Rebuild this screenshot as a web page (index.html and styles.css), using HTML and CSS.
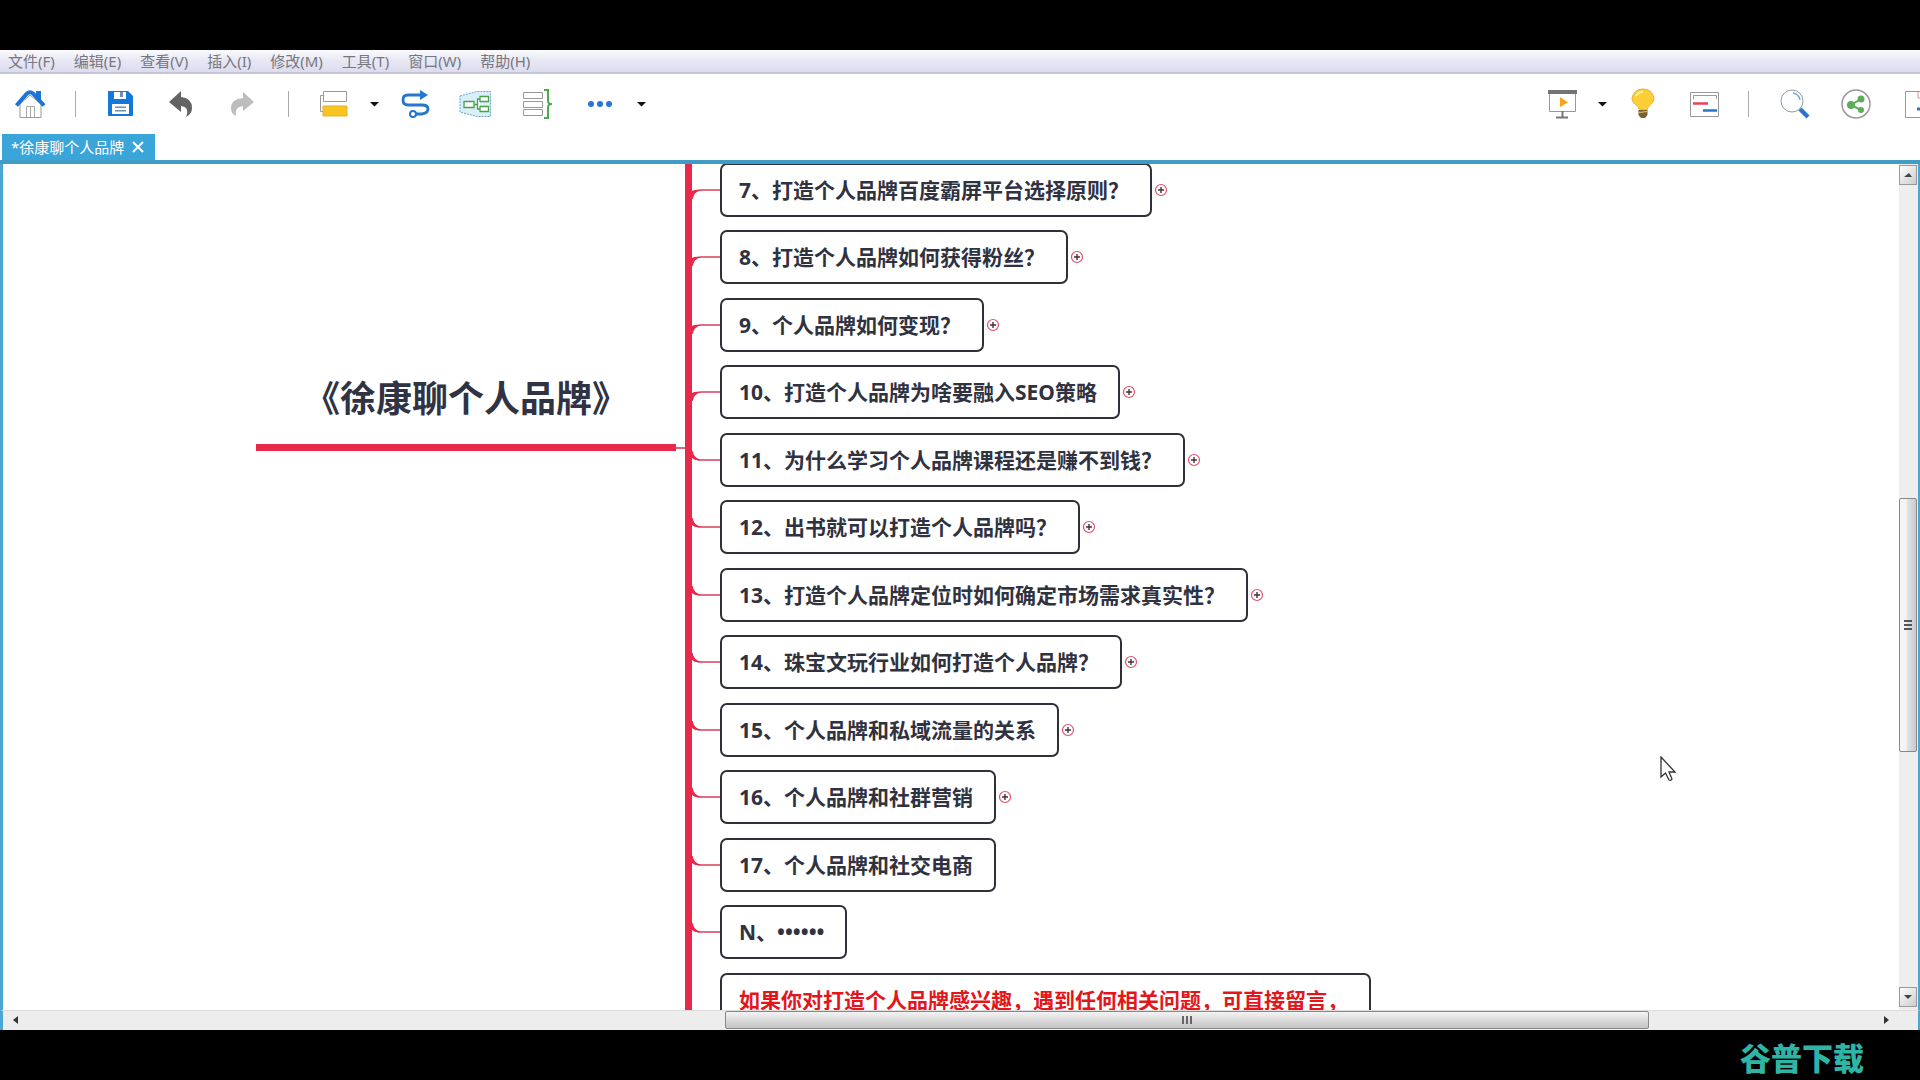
FILE: index.html
```html
<!DOCTYPE html>
<html lang="zh-CN">
<head>
<meta charset="utf-8">
<title>徐康聊个人品牌</title>
<link rel="stylesheet" href="styles.css">
</head>
<body>
<svg class="defs" aria-hidden="true">
  <symbol id="branch-down" viewBox="0 0 28 32"><path d="M0 25Q1 16 9 16H28" fill="none" stroke="#dc3f5c" stroke-width="1.600"/><path d="M0 17Q3 15 9 16Q2 18 0 25Z" fill="#e9294b"/></symbol>
  <symbol id="branch-up" viewBox="0 0 28 32"><path d="M0 7Q1 16 9 16H28" fill="none" stroke="#dc3f5c" stroke-width="1.600"/><path d="M0 7Q2 14 9 16Q3 17 0 14Z" fill="#e9294b"/></symbol>
  <symbol id="plus" viewBox="0 0 14 14"><circle cx="7" cy="7" r="5.5" fill="#fff" stroke="#e2506b" stroke-width="1.2"/><path d="M4 7H10M7 4V10" stroke="#43303c" stroke-width="1.4"/></symbol>
  <symbol id="caret" viewBox="0 0 14 14"><path d="M3 5H12L7.500 9.500Z" fill="#111"/></symbol>
</svg>
<div class="app">
  <nav class="menubar">
    <button>文件(F)</button><button>编辑(E)</button><button>查看(V)</button><button>插入(I)</button><button>修改(M)</button><button>工具(T)</button><button>窗口(W)</button><button>帮助(H)</button>
  </nav>
  <div class="toolbar">
    <div class="tools">
      <button class="tool" aria-label="主页"><svg viewBox="0 0 32 32"><path d="M6 16V29.500H27V16L16 7Z" fill="#fff" stroke="#999"/><path d="M12.500 29V18.500H20.500V29M16.500 18.500V29" fill="none" stroke="#aaa"/><path d="M2.500 17.500L13 5.500Q16 3 19 5.500L30 17.500" fill="none" stroke="#1d74d6" stroke-width="4"/><path d="M22 3H27V12L22 8Z" fill="#1d74d6"/></svg></button>
      <span class="sep"></span>
      <button class="tool" aria-label="保存"><svg viewBox="0 0 32 32"><path d="M3 3H23L28 8V27Q28 28 27 28H4Q3 28 3 27Z" fill="#1478d8"/><path d="M9 4H21V11H9ZM7 16H24V26H7Z" fill="#fff"/><path d="M15 4H18V9H15ZM10 18.500H21V20H10ZM10 22H21V23.500H10Z" fill="#6c91b5"/></svg></button>
      <button class="tool" aria-label="撤销"><svg viewBox="0 0 32 32"><path d="M3 14L15 3V9Q26 10 26 20Q26 26 20 29Q24 19 15 18V24Z" fill="#636363"/></svg></button>
      <button class="tool" aria-label="重做"><svg viewBox="0 0 32 32"><path d="M27 14L16 4V10Q4 11 4 20Q4 26 9 28Q7 19 16 18V23Z" fill="#bdbdbd"/></svg></button>
      <span class="sep"></span>
      <button class="tool" aria-label="主题"><svg viewBox="0 0 32 32"><path d="M6 7.500H2.500V23.500H6M5.500 3.500H28.500V13.500H5.500Z" fill="none" stroke="#999"/><path d="M5 18H29V28H5Z" fill="#fac51e" stroke="#dfb233"/></svg></button>
      <button class="caret" aria-label="更多主题"><svg><use href="#caret"/></svg></button>
      <button class="tool" aria-label="关系"><svg viewBox="0 0 32 32"><path d="M24 7H10Q5 7 5 12T10 17H24Q30 17 30 21T24 26H17" fill="none" stroke="#2477ca" stroke-width="2.800"/><path d="M22 2L30 7L22 12Z" fill="#2477ca"/><circle cx="15" cy="26" r="3" fill="#fff" stroke="#2477ca" stroke-width="2"/></svg></button>
      <button class="tool" aria-label="外框"><svg viewBox="0 0 32 32"><path d="M1 8L18 3.500H31.500V28.500H18L1 24Z" fill="#d9effa" stroke="#6aa6c6" stroke-dasharray="2 1"/><path d="M5 13.500H15V19.500H5ZM21 8.500H29.500V13.500H21ZM21 18.500H29.500V23.500H21ZM15 16.500H18M21 11H18.500V21H21" fill="#fff" stroke="#4ca04a" stroke-width="1.300"/></svg></button>
      <button class="tool" aria-label="概要"><svg viewBox="0 0 32 32"><path d="M3.500 4.500H22.500V10.500H3.500ZM3.500 13.500H22.500V19.500H3.500ZM3.500 21.500H22.500V27.500H3.500Z" fill="#fff" stroke="#999"/><path d="M24 2H28V13Q28 16 32 16Q28 16 28 19V30H24" fill="none" stroke="#50a850" stroke-width="2"/></svg></button>
      <button class="tool wide" aria-label="更多"><svg viewBox="0 0 36 32"><circle cx="10" cy="16" r="3" fill="#2477d3"/><circle cx="19" cy="16" r="3" fill="#2477d3"/><circle cx="28" cy="16" r="3" fill="#2477d3"/></svg></button>
      <button class="caret" aria-label="更多选项"><svg><use href="#caret"/></svg></button>
    </div>
    <div class="tools tools-end">
      <button class="tool" aria-label="演示"><svg viewBox="0 0 32 32"><path d="M3.500 6V23.500H29.500V6" fill="#fff" stroke="#999"/><path d="M2 2H31V6H2Z" fill="#747474"/><path d="M16.500 23V29M10 29.500H22" stroke="#777" stroke-width="2"/><path d="M14 9L22 14.500L14 19Z" fill="#f9a11b"/></svg></button>
      <button class="caret" aria-label="演示选项"><svg><use href="#caret"/></svg></button>
      <button class="tool" aria-label="头脑风暴"><svg viewBox="0 0 32 32"><path d="M13 21C12 17 6 16 6 10Q8 1 17 1T28 10C28 16 22 17 21 22Z" fill="#fdcf35" stroke="#e2b43a"/><path d="M10 8Q12 4 17 4" fill="none" stroke="#fff0a0" stroke-width="2"/><path d="M12.500 22H21.500V27L19 30H15L12.500 27Z" fill="#79612e"/><path d="M13 24.500L21 23.500" stroke="#dfc780"/></svg></button>
      <button class="tool" aria-label="甘特图"><svg viewBox="0 0 32 32"><path d="M3.500 4.500H31.500V28.500H3.500Z" fill="#fff" stroke="#999"/><path d="M6.500 11V7.500H29.500V11" fill="none" stroke="#999"/><path d="M6 15.500H21" stroke="#e5435e" stroke-width="2.500"/><path d="M16 22.500H30" stroke="#2477ca" stroke-width="2.500"/></svg></button>
      <span class="sep"></span>
      <button class="tool" aria-label="搜索"><svg viewBox="0 0 32 32"><circle cx="14" cy="13" r="11" fill="#fdfeff" stroke="#999"/><path d="M15 5Q21 6 22 12" fill="none" stroke="#67aee8" stroke-width="1.500"/><path d="M22 21L30 29" stroke="#2876d2" stroke-width="4.500"/></svg></button>
      <button class="tool" aria-label="分享"><svg viewBox="0 0 32 32"><circle cx="17" cy="16" r="14" fill="#fff" stroke="#999" stroke-width="1.500"/><path d="M22 11L12 17L22 22" fill="none" stroke="#5caf58" stroke-width="2"/><circle cx="12" cy="17" r="4" fill="#5caf58"/><circle cx="22" cy="11" r="3.500" fill="#5caf58"/><circle cx="22" cy="22" r="3" fill="#5caf58"/></svg></button>
      <button class="tool" aria-label="导出"><svg viewBox="0 0 32 32"><path d="M5.500 3.500H22L28 9V29.500H5.500Z" fill="#fff" stroke="#999"/><path d="M18 4V10H24" fill="none" stroke="#d79a86"/><path d="M17 21H28" stroke="#2477ca" stroke-width="3"/></svg></button>
    </div>
  </div>
  <div class="tabs"><div class="tab"><span>*徐康聊个人品牌</span><button aria-label="关闭"><svg viewBox="0 0 12 12"><path d="M1 1L11 11M11 1L1 11" stroke="#fff" stroke-width="2"/></svg></button></div></div>
  <div class="workspace">
    <main class="canvas">
      <h1 class="root">《徐康聊个人品牌》</h1>
      <span class="root-link"></span>
      <ul class="branches">
        <li><svg class="link"><use href="#branch-down"/></svg><div class="node">7、打造个人品牌百度霸屏平台选择原则<span class="mark">？</span></div><button class="expand" aria-label="展开"><svg><use href="#plus"/></svg></button></li>
        <li><svg class="link"><use href="#branch-down"/></svg><div class="node">8、打造个人品牌如何获得粉丝<span class="mark">？</span></div><button class="expand" aria-label="展开"><svg><use href="#plus"/></svg></button></li>
        <li><svg class="link"><use href="#branch-down"/></svg><div class="node">9、个人品牌如何变现<span class="mark">？</span></div><button class="expand" aria-label="展开"><svg><use href="#plus"/></svg></button></li>
        <li><svg class="link"><use href="#branch-down"/></svg><div class="node">10、打造个人品牌为啥要融入SEO策略</div><button class="expand" aria-label="展开"><svg><use href="#plus"/></svg></button></li>
        <li><svg class="link"><use href="#branch-up"/></svg><div class="node">11、为什么学习个人品牌课程还是赚不到钱<span class="mark">？</span></div><button class="expand" aria-label="展开"><svg><use href="#plus"/></svg></button></li>
        <li><svg class="link"><use href="#branch-up"/></svg><div class="node">12、出书就可以打造个人品牌吗<span class="mark">？</span></div><button class="expand" aria-label="展开"><svg><use href="#plus"/></svg></button></li>
        <li><svg class="link"><use href="#branch-up"/></svg><div class="node">13、打造个人品牌定位时如何确定市场需求真实性<span class="mark">？</span></div><button class="expand" aria-label="展开"><svg><use href="#plus"/></svg></button></li>
        <li><svg class="link"><use href="#branch-up"/></svg><div class="node">14、珠宝文玩行业如何打造个人品牌<span class="mark">？</span></div><button class="expand" aria-label="展开"><svg><use href="#plus"/></svg></button></li>
        <li><svg class="link"><use href="#branch-up"/></svg><div class="node">15、个人品牌和私域流量的关系</div><button class="expand" aria-label="展开"><svg><use href="#plus"/></svg></button></li>
        <li><svg class="link"><use href="#branch-up"/></svg><div class="node">16、个人品牌和社群营销</div><button class="expand" aria-label="展开"><svg><use href="#plus"/></svg></button></li>
        <li><svg class="link"><use href="#branch-up"/></svg><div class="node">17、个人品牌和社交电商</div></li>
        <li><svg class="link"><use href="#branch-up"/></svg><div class="node">N、••••••</div></li>
        <li><svg class="link"></svg><div class="node notice">如果你对打造个人品牌感兴趣，遇到任何相关问题，可直接留言，</div></li>
      </ul>
      <svg class="cursor" viewBox="0 0 18 26"><path d="M1 1V21L5.500 17L9 24Q11 25 12 23L9 16H15Z" fill="#fff" stroke="#333" stroke-width="1.300"/></svg>
    </main>
    <div class="vscroll">
      <button class="step" aria-label="向上滚动"><svg viewBox="0 0 10 10"><path d="M1 7H9L6 3Z" fill="#444"/></svg></button>
      <span class="v-before"></span><div class="v-thumb"><svg viewBox="0 0 10 12"><path d="M1 2H9M1 6H9M1 10H9" stroke="#555" stroke-width="2"/></svg></div><span class="v-after"></span>
      <button class="step" aria-label="向下滚动"><svg viewBox="0 0 10 10"><path d="M1 3H9L5 7Z" fill="#444"/></svg></button>
    </div>
  </div>
  <div class="hscroll">
    <button class="h-step" aria-label="向左滚动"><svg viewBox="0 0 10 10"><path d="M7 1V9L2 5Z" fill="#333"/></svg></button>
    <span class="h-before"></span><div class="h-thumb"><svg viewBox="0 0 12 10"><path d="M2 1V9M6 1V9M10 1V9" stroke="#666" stroke-width="2"/></svg></div><span class="h-after"></span>
    <button class="h-step" aria-label="向右滚动"><svg viewBox="0 0 10 10"><path d="M3 1V9L8 5Z" fill="#333"/></svg></button>
  </div>
</div>
<footer class="brand">谷普下载</footer>
</body>
</html>
```
FILE: styles.css
```css
* { box-sizing: border-box; }
body {
  margin: 0;
  height: 100vh;
  padding-top: 50px;
  display: flex;
  flex-direction: column;
  overflow: hidden;
  background: #000;
  font-family: "Noto Sans", "Noto Sans CJK SC", sans-serif;
}
button { padding: 0; border: 0; background: none; font: inherit; color: inherit; }
svg { display: block; }
.defs { position: absolute; width: 0; height: 0; }
.app { flex: 1; min-height: 0; display: flex; flex-direction: column; background: #fff; }

.menubar {
  flex: none;
  height: 24px;
  display: flex;
  align-items: center;
  gap: 19px;
  padding-left: 8px;
  border-bottom: 2px solid #c5c5d9;
  background: linear-gradient(#fafafd, #e7e7f4 50%, #dcdcee);
  color: #77777f;
  font-size: 15px;
  line-height: 20px;
}
.menubar button { white-space: nowrap; }

.toolbar { flex: none; height: 60px; display: flex; justify-content: space-between; padding-left: 14px; overflow: hidden; }
.tools { display: flex; align-items: center; gap: 29px; }
.tools-end { margin-right: -12px; }
.tool, .tool svg { flex: none; width: 32px; height: 32px; }
.tool.wide, .tool.wide svg { width: 36px; }
.caret { margin: 0 -12px; }
.caret, .caret svg { width: 14px; height: 14px; }
.sep { width: 1px; height: 26px; background: #aaa; }

.tabs { flex: none; height: 30px; padding-left: 2px; display: flex; border-bottom: 4px solid #429bc5; }
.tab { display: flex; align-items: center; gap: 8px; padding: 0 11px 0 9px; background: #39a5d9; color: #fff; font-size: 15px; line-height: 20px; }
.tab button, .tab svg { width: 12px; height: 12px; }

.workspace { flex: 1; min-height: 0; display: flex; border-left: 3px solid #4ba6d3; border-right: 2px solid #4ba6d3; }
.canvas { position: relative; flex: 1; min-width: 0; display: flex; align-items: flex-start; overflow: hidden; padding-left: 253px; }
.root {
  flex: none;
  width: 420px;
  height: 287px;
  margin: 0;
  padding-top: 208px;
  border-bottom: 7px solid #e9294b;
  color: #2f3343;
  font-size: 36px;
  line-height: 54px;
  text-align: center;
  white-space: nowrap;
}
.root-link { flex: none; width: 9px; height: 2px; margin-top: 283px; background: #e0607a; }
.branches { flex: none; margin: -1px 0 0; padding: 0; list-style: none; border-left: 7px solid #e9294b; }
.branches li { display: flex; align-items: center; height: 54px; margin-bottom: 14px; }
.branches li:nth-child(odd) { margin-bottom: 13px; }
.link { width: 28px; height: 32px; }
.node {
  height: 54px;
  padding: 0 21px 0 17px;
  border: 2px solid #2f3038;
  border-radius: 7px;
  color: #30323f;
  font-size: 21px;
  font-weight: 700;
  line-height: 50px;
  white-space: nowrap;
}
.mark { font-family: "Noto Sans CJK TC", sans-serif; line-height: 1; }
.node.notice { color: #e3161b; }
.expand { margin-left: 2px; }
.expand, .expand svg { width: 14px; height: 14px; }
.cursor { position: absolute; right: 221px; top: 592px; width: 18px; height: 26px; }

.vscroll { flex: none; width: 19px; display: flex; flex-direction: column; padding: 1px 1px 3px 0; background: #eee; }
.step { flex: none; height: 20px; display: flex; align-items: center; justify-content: center; border: 1px solid #999; background: linear-gradient(135deg, #fff, #ccc); }
.step svg, .h-step svg { width: 10px; height: 10px; }
.v-before { flex: 314; }
.v-thumb { flex: 253; display: flex; align-items: center; justify-content: center; border: 1px solid #888; border-radius: 2px; background: linear-gradient(90deg, #f5f5f5 35%, #e2e0e0 50%, #c8c9d3); }
.v-after { flex: 236; }
.v-thumb svg { width: 10px; height: 12px; }

.hscroll { flex: none; height: 20px; display: flex; padding: 0 27px 1px 8px; border-left: 3px solid #4ba6d3; border-top: 1px solid #ddd; border-right: 2px solid #4ba6d3; background: #ededed; }
.h-step { flex: none; width: 10px; display: flex; align-items: center; }
.h-before { flex: 705; }
.h-thumb { flex: 923; display: flex; align-items: center; justify-content: center; border: 1px solid #888; border-radius: 2px; background: linear-gradient(#f3f3f3, #dedede 45%, #c4c4c4); }
.h-after { flex: 232; }
.h-thumb svg { width: 12px; height: 10px; }

.brand { flex: none; height: 50px; padding: 5px 56px 0 0; text-align: right; color: #2fb5a6; font-family: "Noto Sans CJK SC", sans-serif; font-size: 31px; font-weight: 900; line-height: 44px; }
```
